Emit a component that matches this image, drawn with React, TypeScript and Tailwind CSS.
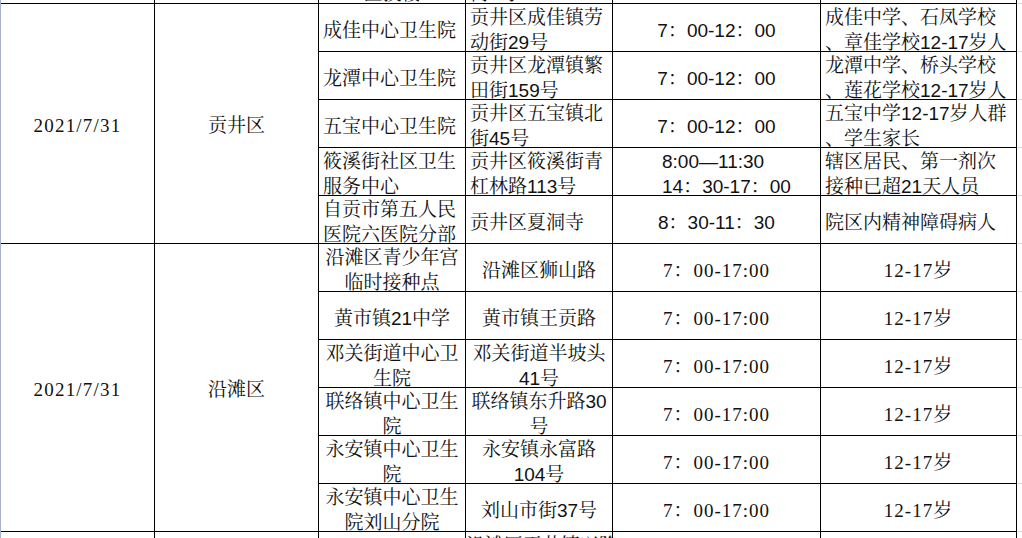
import React from "react";

// Spreadsheet excerpt: vaccination sites, 2021/7/31

const SANS = "font-['Liberation_Sans','Noto_Serif_CJK_SC','Noto_Sans_CJK_SC',sans-serif]";
const SERIF = "font-['Liberation_Serif','Noto_Serif_CJK_SC','Noto_Sans_CJK_SC',serif]";

interface Site {
  name: string[];
  addr: string[];
  time: string[];
  who: string[];
}

const gongjing: Site[] = [
  { name: ["成佳中心卫生院"], addr: ["贡井区成佳镇劳", "动街29号"], time: ["7：00-12：00"], who: ["成佳中学、石凤学校", "、章佳学校12-17岁人"] },
  { name: ["龙潭中心卫生院"], addr: ["贡井区龙潭镇繁", "田街159号"], time: ["7：00-12：00"], who: ["龙潭中学、桥头学校", "、莲花学校12-17岁人"] },
  { name: ["五宝中心卫生院"], addr: ["贡井区五宝镇北", "街45号"], time: ["7：00-12：00"], who: ["五宝中学12-17岁人群", "、学生家长"] },
  { name: ["筱溪街社区卫生", "服务中心"], addr: ["贡井区筱溪街青", "杠林路113号"], time: ["8:00—11:30", "14：30-17：00"], who: ["辖区居民、第一剂次", "接种已超21天人员"] },
  { name: ["自贡市第五人民", "医院六医院分部"], addr: ["贡井区夏洞寺"], time: ["8：30-11：30"], who: ["院区内精神障碍病人"] },
];

const yantan: Site[] = [
  { name: ["沿滩区青少年宫", "临时接种点"], addr: ["沿滩区狮山路"], time: ["7：00-17:00"], who: ["12-17岁"] },
  { name: ["黄市镇21中学"], addr: ["黄市镇王贡路"], time: ["7：00-17:00"], who: ["12-17岁"] },
  { name: ["邓关街道中心卫", "生院"], addr: ["邓关街道半坡头", "41号"], time: ["7：00-17:00"], who: ["12-17岁"] },
  { name: ["联络镇中心卫生", "院"], addr: ["联络镇东升路30", "号"], time: ["7：00-17:00"], who: ["12-17岁"] },
  { name: ["永安镇中心卫生", "院"], addr: ["永安镇永富路", "104号"], time: ["7：00-17:00"], who: ["12-17岁"] },
  { name: ["永安镇中心卫生", "院刘山分院"], addr: ["刘山市街37号"], time: ["7：00-17:00"], who: ["12-17岁"] },
];

function Cell({ width, lines, className }: { width: string; lines: string[]; className: string }) {
  return (
    <div className={`${width} h-full shrink-0 border-r border-b border-black overflow-hidden flex items-center pt-[5px] ${className}`}>
      <div className="w-full text-[19px] leading-[25px] text-[#111]">
        {lines.map((l, i) => (
          <div key={i} className="whitespace-nowrap">{l}</div>
        ))}
      </div>
    </div>
  );
}

function Gutter() {
  return <div className="w-[5px] h-full shrink-0 border-b border-[#d6d6d6]" />;
}

function SiteRow({ site, centered, timeClass }: { site: Site; centered: boolean; timeClass: string }) {
  const align = centered ? "text-center" : "text-left px-[4px]";
  return (
    <div className="flex h-[48px]">
      <Cell width="w-[147px]" lines={site.name} className={`${SANS} ${align}`} />
      <Cell width="w-[147px]" lines={site.addr} className={`${SANS} ${align}`} />
      <Cell width="w-[208px]" lines={site.time} className={timeClass} />
      <Cell width="w-[196px]" lines={site.who} className={centered ? `${SERIF} text-center tracking-[1px]` : `${SANS} text-left px-[4px]`} />
      <Gutter />
    </div>
  );
}

function Section({ district, sites, centered }: { district: string; sites: Site[]; centered: boolean }) {
  return (
    <div className="flex">
      <div className={`w-[154px] shrink-0 border-r border-b border-black flex items-center justify-center pt-[5px] text-[19px] text-[#111] tracking-[1.2px] ${SERIF}`}>
        2021/7/31
      </div>
      <div className={`w-[164px] shrink-0 border-r border-b border-black flex items-center justify-center pt-[5px] text-[19px] text-[#111] ${SERIF}`}>
        {district}
      </div>
      <div className="flex flex-col">
        {sites.map((s, i) => (
          <SiteRow
            key={i}
            site={s}
            centered={centered}
            timeClass={
              centered
                ? `${SERIF} text-center tracking-[1px]`
                : s.time.length > 1
                  ? `${SANS} text-left pl-[49px]`
                  : `${SANS} text-center`
            }
          />
        ))}
      </div>
    </div>
  );
}

export default function App() {
  return (
    <div className="w-[1022px] h-[538px] overflow-hidden bg-white border-l border-[#a6b0c8] flex flex-col">
      {/* tail of the row above, only its last pixels show */}
      <div className="flex h-[4px] shrink-0">
        <div className="w-[154px] shrink-0 border-r border-b border-black" />
        <div className="w-[164px] shrink-0 border-r border-b border-black" />
        <div className={`w-[147px] shrink-0 border-r border-b border-black overflow-hidden ${SANS}`}>
          <div className="-mt-[19px] text-center text-[19px] leading-[25px] text-[#111] whitespace-nowrap">医技楼</div>
        </div>
        <div className={`w-[147px] shrink-0 border-r border-b border-black overflow-hidden ${SANS}`}>
          <div className="-mt-[19px] pl-[4px] text-[19px] leading-[25px] text-[#111] whitespace-nowrap">街2号</div>
        </div>
        <div className="w-[208px] shrink-0 border-r border-b border-black" />
        <div className="w-[196px] shrink-0 border-r border-b border-black" />
        <Gutter />
      </div>

      <Section district="贡井区" sites={gongjing} centered={false} />
      <Section district="沿滩区" sites={yantan} centered={true} />

      {/* head of the next row */}
      <div className="flex h-[48px] shrink-0">
        <div className="w-[154px] shrink-0 border-r border-black" />
        <div className="w-[164px] shrink-0 border-r border-black" />
        <Cell width="w-[147px]" lines={["王井镇卫生院"]} className={`${SANS} text-center`} />
        <Cell width="w-[147px]" lines={["沿滩区王井镇兴隆", "街88号"]} className={`${SANS} text-center`} />
        <Cell width="w-[208px]" lines={["7：00-17:00"]} className={`${SERIF} text-center`} />
        <Cell width="w-[196px]" lines={["12-17岁"]} className={`${SERIF} text-center`} />
        <Gutter />
      </div>
    </div>
  );
}
